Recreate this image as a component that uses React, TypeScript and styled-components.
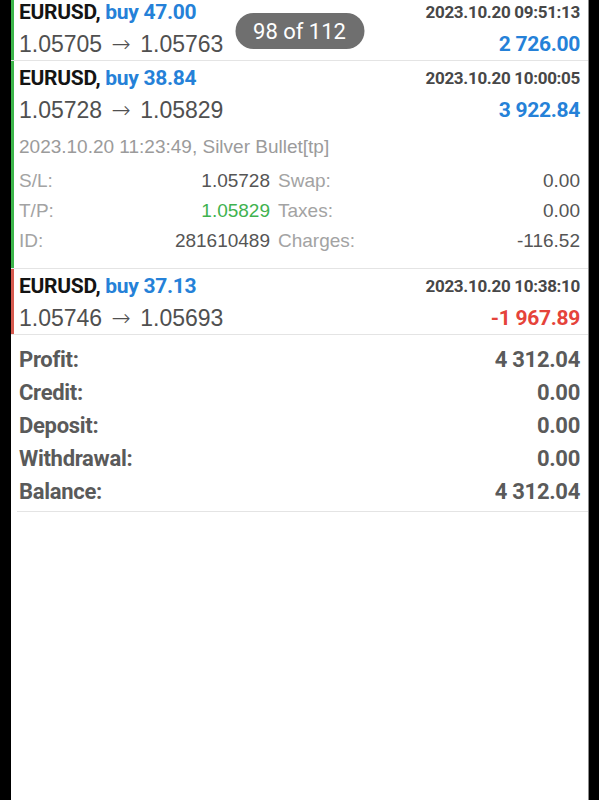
import React from "react";
import styled, { createGlobalStyle } from "styled-components";

const GlobalStyle = createGlobalStyle`
  html, body {
    margin: 0;
    padding: 0;
    background: #000;
  }
  body {
    font-family: "Liberation Sans", Arial, sans-serif;
  }
`;

type Deal = {
  volume: string;
  open: string;
  close: string;
  time: string;
  profit: string;
  loss?: boolean;
  details?: boolean;
};

const deals: Deal[] = [
  { volume: "47.00", open: "1.05705", close: "1.05763", time: "2023.10.20 09:51:13", profit: "2 726.00" },
  {
    volume: "38.84",
    open: "1.05728",
    close: "1.05829",
    time: "2023.10.20 10:00:05",
    profit: "3 922.84",
    details: true,
  },
  { volume: "37.13", open: "1.05746", close: "1.05693", time: "2023.10.20 10:38:10", profit: "-1 967.89", loss: true },
];

const summary = [
  ["Profit:", "4 312.04"],
  ["Credit:", "0.00"],
  ["Deposit:", "0.00"],
  ["Withdrawal:", "0.00"],
  ["Balance:", "4 312.04"],
];

const App: React.FC = () => {
  return (
    <>
      <GlobalStyle />
      <Screen>
        <List>
          {deals.map((d) => (
            <Row key={d.time}>
              <Bar color={d.loss ? "#d65a4f" : "#3cb54a"} />
              <RowBody>
                <HeaderLine>
                  <Title>
                    EURUSD, <Side>buy {d.volume}</Side>
                  </Title>
                  <Time>{d.time}</Time>
                </HeaderLine>
                <HeaderLine>
                  <Prices>
                    {d.open} <Arrow>→</Arrow> {d.close}
                  </Prices>
                  <Amount loss={d.loss}>{d.profit}</Amount>
                </HeaderLine>
                {d.details && (
                  <Details>
                    <Comment>2023.10.20 11:23:49, Silver Bullet[tp]</Comment>
                    <DetailGrid>
                      <Cell>
                        <Label>S/L:</Label>
                        <Value>1.05728</Value>
                      </Cell>
                      <Cell>
                        <Label>Swap:</Label>
                        <Value>0.00</Value>
                      </Cell>
                      <Cell>
                        <Label>T/P:</Label>
                        <Value green>1.05829</Value>
                      </Cell>
                      <Cell>
                        <Label>Taxes:</Label>
                        <Value>0.00</Value>
                      </Cell>
                      <Cell>
                        <Label>ID:</Label>
                        <Value>281610489</Value>
                      </Cell>
                      <Cell>
                        <Label>Charges:</Label>
                        <Value>-116.52</Value>
                      </Cell>
                    </DetailGrid>
                  </Details>
                )}
              </RowBody>
            </Row>
          ))}
        </List>
        <Summary>
          {summary.map(([label, value]) => (
            <SummaryLine key={label}>
              <span>{label}</span>
              <span>{value}</span>
            </SummaryLine>
          ))}
        </Summary>
        <Counter>98 of 112</Counter>
      </Screen>
    </>
  );
};

// Styled components
const Screen = styled.div`
  position: relative;
  box-sizing: border-box;
  width: 578px;
  min-height: 800px;
  margin-left: 11px;
  background: #fff;
  border-right: 1px solid #8c8c8c;
  overflow: hidden;
`;

const List = styled.div`
  margin-top: -5px;
`;

const Row = styled.div`
  display: flex;
  border-bottom: 1px solid #e4e4e4;
`;

const Bar = styled.div<{ color: string }>`
  width: 3px;
  flex-shrink: 0;
  background: ${(props) => props.color};
`;

const RowBody = styled.div`
  flex: 1;
  padding: 1px 8px 0 5px;
`;

const HeaderLine = styled.div`
  display: flex;
  align-items: center;
  justify-content: space-between;
  height: 32px;
`;

const Title = styled.div`
  font-family: Roboto, sans-serif;
  font-weight: 700;
  font-size: 21px;
  letter-spacing: -0.3px;
  color: #141414;
`;

const Side = styled.span`
  color: #2581d8;
`;

const Time = styled.div`
  font-family: Roboto, sans-serif;
  font-weight: 700;
  font-size: 17px;
  letter-spacing: -0.3px;
  color: #474747;
`;

const Prices = styled.div`
  font-size: 23px;
  color: #505050;
`;

const Arrow = styled.span`
  margin: 0 3px;
  font-family: "DejaVu Sans", sans-serif;
  font-size: 23px;
  font-weight: 300;
`;

const Amount = styled.div<{ loss?: boolean }>`
  font-family: Roboto, sans-serif;
  font-weight: 700;
  font-size: 21px;
  letter-spacing: -0.3px;
  color: ${(props) => (props.loss ? "#e5433a" : "#2581d8")};
`;

const Details = styled.div`
  padding-bottom: 12px;
`;

const Comment = styled.div`
  height: 40px;
  padding-top: 2px;
  box-sizing: border-box;
  line-height: 38px;
  font-size: 19px;
  color: #9b9b9b;
`;

const DetailGrid = styled.div`
  display: grid;
  grid-template-columns: 251px 1fr;
  column-gap: 8px;
`;

const Cell = styled.div`
  display: flex;
  justify-content: space-between;
  align-items: center;
  height: 30px;
  font-size: 19px;
`;

const Label = styled.span`
  color: #a3a3a3;
`;

const Value = styled.span<{ green?: boolean }>`
  color: ${(props) => (props.green ? "#3fb24f" : "#555")};
`;

const Summary = styled.div`
  margin-left: 6px;
  padding: 8px 8px 3px 2px;
  border-bottom: 1px solid #e4e4e4;
`;

const SummaryLine = styled.div`
  display: flex;
  align-items: center;
  justify-content: space-between;
  height: 33px;
  font-family: Roboto, sans-serif;
  font-weight: 700;
  font-size: 22px;
  letter-spacing: -0.3px;
  color: #5a5a5a;
`;

const Counter = styled.div`
  position: absolute;
  top: 13px;
  left: 50%;
  transform: translateX(-50%);
  display: flex;
  align-items: center;
  justify-content: center;
  width: 129px;
  height: 36px;
  border-radius: 18px;
  background: #6f6f6f;
  color: #fff;
  font-family: Roboto, sans-serif;
  font-size: 22px;
`;

export default App;
